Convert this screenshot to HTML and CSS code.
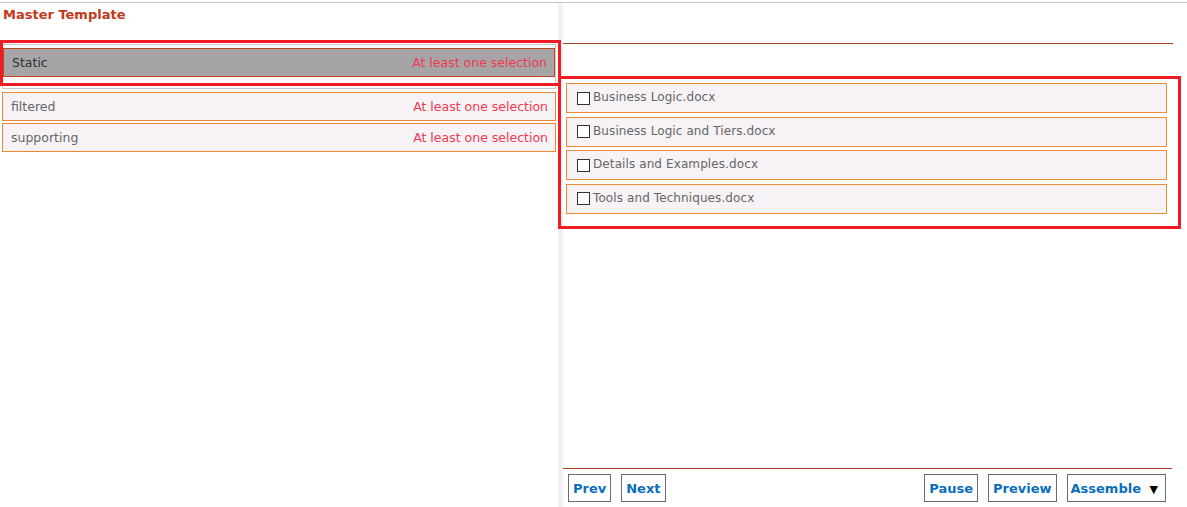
FILE: index.html
```html
<!DOCTYPE html>
<html lang="en">
<head>
    <meta charset="UTF-8">
    <meta name="viewport" content="width=device-width, initial-scale=1.0">
    <title>Master Template</title>
    <link rel="stylesheet" href="styles.css">
</head>
<body>
    <div class="top-line"></div>
    <div class="main">
        <div class="left-panel">
            <h1 class="title">Master Template</h1>
            <div class="group">
                <div class="sel-row active">
                    <span>Static</span>
                    <span class="hint">At least one selection</span>
                </div>
            </div>
            <div class="sel-row">
                <span>filtered</span>
                <span class="hint">At least one selection</span>
            </div>
            <div class="sel-row">
                <span>supporting</span>
                <span class="hint">At least one selection</span>
            </div>
            <div class="mark-left"></div>
        </div>

        <div class="divider"></div>

        <div class="right-panel">
            <div class="right-head"></div>
            <div class="file-list">
                <label class="file-row"><input type="checkbox" class="box"><span>Business Logic.docx</span></label>
                <label class="file-row"><input type="checkbox" class="box"><span>Business Logic and Tiers.docx</span></label>
                <label class="file-row"><input type="checkbox" class="box"><span>Details and Examples.docx</span></label>
                <label class="file-row"><input type="checkbox" class="box"><span>Tools and Techniques.docx</span></label>
            </div>
            <div class="footer">
                <button class="btn">Prev</button>
                <button class="btn">Next</button>
                <div class="spacer"></div>
                <button class="btn">Pause</button>
                <button class="btn">Preview</button>
                <button class="btn assemble">Assemble <span class="caret">&#9660;</span></button>
            </div>
        </div>
    </div>
</body>
</html>
```

FILE: styles.css
```css
body {
    margin: 0;
    font-family: "DejaVu Sans", Verdana, sans-serif;
    font-size: 12px;
    color: #555;
    background: #fff;
    overflow: hidden;
}

.top-line {
    margin-top: 2px;
    border-top: 1px solid #c6c6c6;
}

.main {
    display: flex;
    height: 504px;
}

/* left side */
.left-panel {
    position: relative;
    width: 558px;
    flex: none;
}

.title {
    margin: 0;
    padding: 4px 0 0 3px;
    height: 24px;
    box-sizing: border-box;
    font-size: 13px;
    font-weight: bold;
    color: #c0391b;
}

.group {
    margin: 17px 2px 0 2px;
    padding: 3px 0 11px 0;
    border: 1px solid #c8c8c8;
}

.sel-row {
    display: flex;
    justify-content: space-between;
    align-items: center;
    height: 29px;
    box-sizing: border-box;
    margin: 0 2px 2px 2px;
    padding: 0 7px 0 8px;
    border: 1px solid #f0882f;
    background: #f6f2f6;
    color: #666;
    font-size: 12.5px;
}

.group .sel-row.active {
    margin: 0;
    background: #a6a4a6;
    border-color: #c4461c;
    color: #333;
}

.group + .sel-row {
    margin-top: 3px;
}

.hint {
    color: #ee3a4f;
}

.mark-left {
    position: absolute;
    top: 37px;
    left: 0;
    width: 561px;
    height: 46px;
    box-sizing: border-box;
    border: 3px solid #ee1c25;
}

.divider {
    width: 5px;
    flex: none;
    background: #f5f0f3;
}

/* right side */
.right-panel {
    flex: 1;
    display: flex;
    flex-direction: column;
}

.right-head {
    height: 40px;
    margin-right: 14px;
    border-bottom: 1px solid #a84520;
}

.file-list {
    margin: 32px 6px 0 -5px;
    padding: 4px 11px 12px 5px;
    border: 3px solid #ee1c25;
    display: flex;
    flex-direction: column;
    gap: 3.5px;
    position: relative;
}

.file-row {
    display: flex;
    align-items: center;
    height: 30px;
    box-sizing: border-box;
    padding: 0 0 2px 10px;
    border: 1px solid #ec8a35;
    background: #f6f2f6;
    color: #666;
    letter-spacing: 0.1px;
}

.box {
    appearance: none;
    width: 13px;
    height: 13px;
    margin: 2px 3px 0 0;
    border: 1px solid #333;
    background: #fff;
}

.footer {
    margin-top: auto;
    margin-right: 15px;
    display: flex;
    gap: 10px;
    padding: 5px 6px 5px 5px;
    border-top: 1px solid #b2401c;
}

.spacer {
    flex: 1;
}

.btn {
    height: 28px;
    padding: 0 4px;
    border: 1px solid #6b6b6b;
    background: #fff;
    font-family: "DejaVu Sans", Verdana, sans-serif;
    font-size: 13px;
    font-weight: bold;
    color: #0a6ebd;
}

.assemble {
    padding: 0 7px 0 3px;
}

.caret {
    color: #000;
    font-size: 11px;
    margin-left: 4px;
}
```
